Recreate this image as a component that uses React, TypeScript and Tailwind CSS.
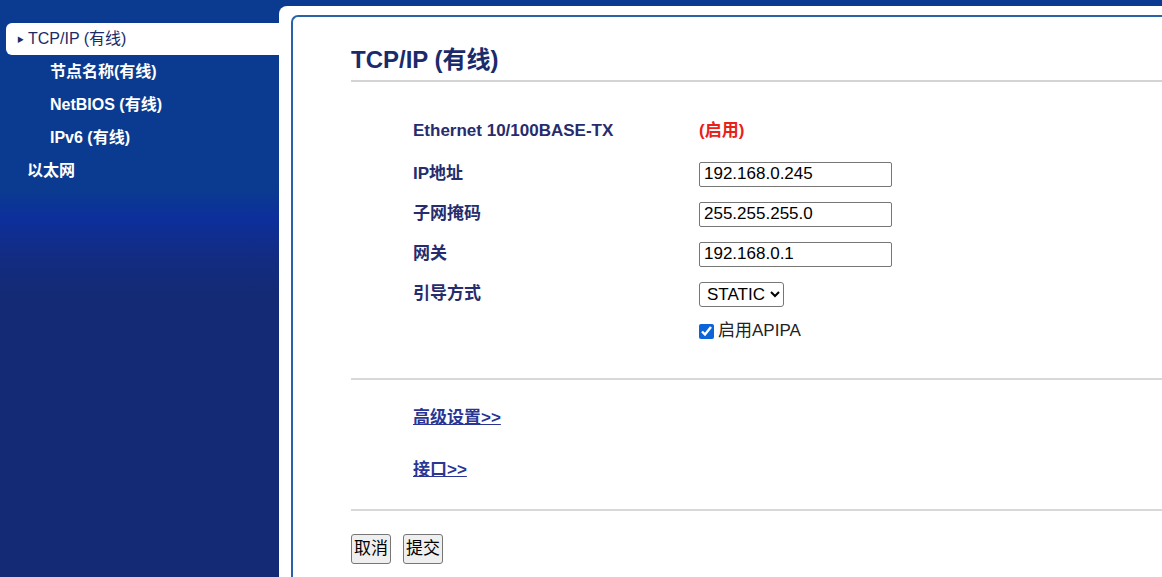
import { useState } from "react";

const font = "font-['Liberation_Sans','Noto_Sans_CJK_SC',sans-serif]";

const navItems = [
  { label: "节点名称(有线)", indent: true },
  { label: "NetBIOS (有线)", indent: true },
  { label: "IPv6 (有线)", indent: true },
  { label: "以太网", indent: false },
];

const fields = [
  { label: "IP地址", value: "192.168.0.245" },
  { label: "子网掩码", value: "255.255.255.0" },
  { label: "网关", value: "192.168.0.1" },
];

const App = () => {
  const [bootMethod, setBootMethod] = useState("STATIC");
  const [apipa, setApipa] = useState(true);

  return (
    <div className={`flex h-[577px] w-full overflow-hidden bg-[#0a3b90] ${font}`}>
      {/* Menu latéral */}
      <aside className="w-[279px] shrink-0 bg-[linear-gradient(to_bottom,#0a3b90_0px,#0a3b90_190px,#0d2f9c_218px,#132c80_260px,#142a74_300px,#142a74_100%)] pt-[23px] pl-[6px]">
        <div className="flex h-[32px] items-center rounded-l-[6px] bg-white pl-[11px] text-[16px] leading-[20px] text-[#1d2a66]">
          <span className="mr-[4px] text-[7px] leading-none">▶</span>
          TCP/IP (有线)
        </div>
        {navItems.map((item) => (
          <div
            key={item.label}
            className={`flex h-[33px] items-center text-[16px] font-bold leading-[20px] text-white ${
              item.indent ? "pl-[44px]" : "pl-[21px]"
            }`}
          >
            {item.label}
          </div>
        ))}
      </aside>

      {/* Zone principale */}
      <main className="mt-[6px] flex-1 rounded-tl-[8px] bg-white pl-[12px] pt-[9px]">
        <div className="h-full rounded-tl-[7px] border-l-2 border-t-2 border-[#2a62a8] pl-[58px]">
          <h1 className="mt-[29px] border-b-2 border-[#d4d4d4] pb-[6px] text-[24px] font-bold leading-[28px] text-[#1b2a6b]">
            TCP/IP (有线)
          </h1>

          <div className="mt-[29px] pl-[62px]">
            <div className="flex h-[40px] items-center">
              <span className="w-[286px] text-[17px] font-bold text-[#262c6d]">
                Ethernet 10/100BASE-TX
              </span>
              <span className="text-[17px] font-bold text-[#e8221b]">(启用)</span>
            </div>

            <div className="mt-[3px]">
              {fields.map((f) => (
                <div key={f.label} className="flex h-[40px] items-center">
                  <span className="w-[286px] text-[17px] font-bold text-[#262c6d]">{f.label}</span>
                  <input
                    type="text"
                    defaultValue={f.value}
                    className="h-[25px] w-[193px] rounded-[2px] border border-[#767676] px-[4px] text-[17px] text-black outline-none"
                  />
                </div>
              ))}
              <div className="flex h-[40px] items-center">
                <span className="w-[286px] text-[17px] font-bold text-[#262c6d]">引导方式</span>
                <select
                  value={bootMethod}
                  onChange={(e) => setBootMethod(e.target.value)}
                  className="h-[25px] rounded-[3px] border border-[#767676] bg-white pl-[3px] text-[17px] text-black"
                >
                  <option value="STATIC">STATIC</option>
                  <option value="AUTO">AUTO</option>
                  <option value="DHCP">DHCP</option>
                  <option value="BOOTP">BOOTP</option>
                  <option value="RARP">RARP</option>
                </select>
              </div>
              <div className="flex h-[34px] items-center pl-[286px]">
                <input
                  type="checkbox"
                  checked={apipa}
                  onChange={(e) => setApipa(e.target.checked)}
                  className="m-0 h-[15px] w-[15px] accent-[#0b65d8]"
                />
                <span className="ml-[4px] text-[17px] text-[#222]">启用APIPA</span>
              </div>
            </div>
          </div>

          <div className="mt-[30px] border-t-2 border-[#d8d8d8]" />

          <div className="pl-[62px]">
            <a href="#" className="mt-[28px] block w-fit text-[17px] font-bold leading-[20px] text-[#2a3594] underline">
              高级设置&gt;&gt;
            </a>
            <a href="#" className="mt-[32px] block w-fit text-[17px] font-bold leading-[20px] text-[#2a3594] underline">
              接口&gt;&gt;
            </a>
          </div>

          <div className="mt-[29px] border-t-2 border-[#d8d8d8]" />

          {/* Boutons */}
          <div className="mt-[23px] flex gap-[12px]">
            <button className="h-[30px] rounded-[3px] border border-[#767676] bg-[#efefef] px-[2px] text-[17px] text-black">
              取消
            </button>
            <button className="h-[30px] rounded-[3px] border border-[#767676] bg-[#efefef] px-[2px] text-[17px] text-black">
              提交
            </button>
          </div>
        </div>
      </main>
    </div>
  );
};

export default App;
